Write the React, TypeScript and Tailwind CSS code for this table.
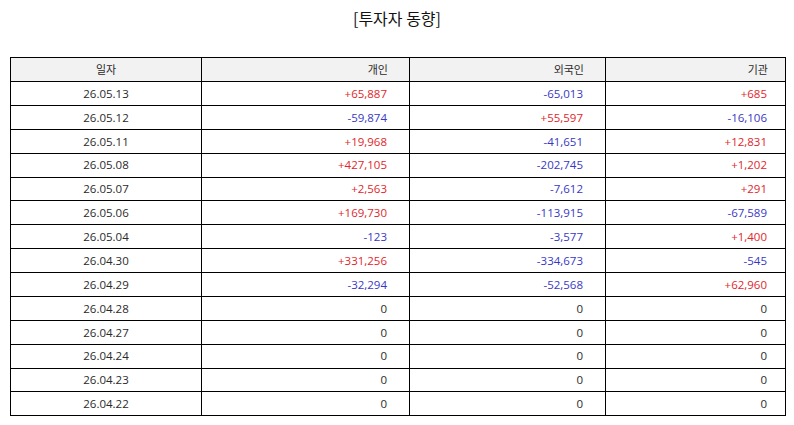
import React from "react";

const rows: [string, string, string, string][] = [
  ["26.05.13", "+65,887", "-65,013", "+685"],
  ["26.05.12", "-59,874", "+55,597", "-16,106"],
  ["26.05.11", "+19,968", "-41,651", "+12,831"],
  ["26.05.08", "+427,105", "-202,745", "+1,202"],
  ["26.05.07", "+2,563", "-7,612", "+291"],
  ["26.05.06", "+169,730", "-113,915", "-67,589"],
  ["26.05.04", "-123", "-3,577", "+1,400"],
  ["26.04.30", "+331,256", "-334,673", "-545"],
  ["26.04.29", "-32,294", "-52,568", "+62,960"],
  ["26.04.28", "0", "0", "0"],
  ["26.04.27", "0", "0", "0"],
  ["26.04.24", "0", "0", "0"],
  ["26.04.23", "0", "0", "0"],
  ["26.04.22", "0", "0", "0"],
];

function cls(v: string) {
  if (v.startsWith("+")) return "text-[#e0262b]";
  if (v.startsWith("-")) return "text-[#3838c4]";
  return "text-[#2a2a2a]";
}

export default function App() {
  return (
    <div
      className="w-[794px] h-[425px] bg-white"
      style={{ fontFamily: '"Open Sans", "Noto Sans CJK KR", sans-serif' }}
    >
      <div
        className="pt-[6px] h-[30px] text-center text-[16px] leading-[24px] text-[#111]"
        style={{ fontFamily: '"Noto Sans CJK KR", sans-serif' }}
      >
        [투자자 동향]
      </div>
      <table className="ml-[10px] mt-[27px] w-[775px] table-fixed border-collapse text-[11.5px] text-[#2a2a2a]">
        <colgroup>
          <col className="w-[191px]" />
          <col className="w-[208px]" />
          <col className="w-[196px]" />
          <col className="w-[180px]" />
        </colgroup>
        <thead>
          <tr className="h-[24px] bg-[#f2f2f2]">
            <th className="border border-black p-0 font-normal text-center text-[11px]" style={{ fontFamily: '"Noto Sans CJK KR", sans-serif' }}>일자</th>
            <th className="border border-black p-0 pr-[21px] font-normal text-right text-[11px]" style={{ fontFamily: '"Noto Sans CJK KR", sans-serif' }}>개인</th>
            <th className="border border-black p-0 pr-[21px] font-normal text-right text-[11px]" style={{ fontFamily: '"Noto Sans CJK KR", sans-serif' }}>외국인</th>
            <th className="border border-black p-0 pr-[17px] font-normal text-right text-[11px]" style={{ fontFamily: '"Noto Sans CJK KR", sans-serif' }}>기관</th>
          </tr>
        </thead>
        <tbody>
          {rows.map((r) => (
            <tr key={r[0]} className="h-[23.88px]">
              <td className="border border-black p-0 text-center">{r[0]}</td>
              <td className={"border border-black p-0 pr-[22px] text-right " + cls(r[1])}>{r[1]}</td>
              <td className={"border border-black p-0 pr-[22px] text-right " + cls(r[2])}>{r[2]}</td>
              <td className={"border border-black p-0 pr-[18px] text-right " + cls(r[3])}>{r[3]}</td>
            </tr>
          ))}
        </tbody>
      </table>
    </div>
  );
}
